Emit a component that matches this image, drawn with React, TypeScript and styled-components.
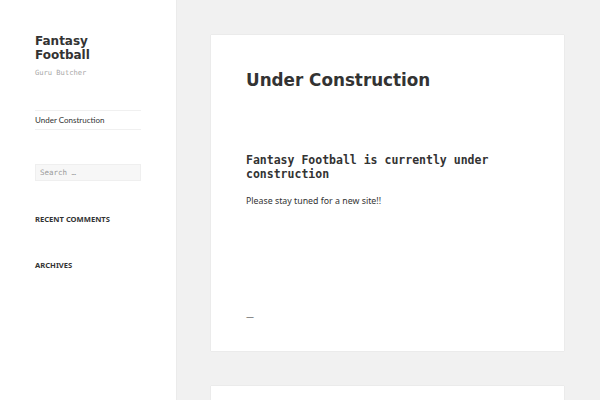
import styled, { createGlobalStyle } from "styled-components";

const GlobalStyle = createGlobalStyle`
  html, body {
    margin: 0;
    padding: 0;
    background: #f1f1f1;
    color: #333;
  }
  * {
    box-sizing: border-box;
  }
`;

function App() {
  return (
    <>
      <GlobalStyle />
      <Page>
        <Sidebar>
          <SiteTitle>Fantasy Football</SiteTitle>
          <Tagline>Guru Butcher</Tagline>
          <Menu>
            <MenuItem>Under Construction</MenuItem>
          </Menu>
          <SearchBox placeholder="Search …" />
          <WidgetTitle>Recent Comments</WidgetTitle>
          <WidgetTitle>Archives</WidgetTitle>
        </Sidebar>
        <Main>
          <Card>
            <EntryTitle>Under Construction</EntryTitle>
            <EntryContent>
              <SubHeading>Fantasy Football is currently under construction</SubHeading>
              <Paragraph>Please stay tuned for a new site!!</Paragraph>
              <Dash>—</Dash>
            </EntryContent>
          </Card>
          <Card $short />
        </Main>
      </Page>
    </>
  );
}

const Page = styled.div`
  display: flex;
  height: 400px;
  overflow: hidden;
`;

const Sidebar = styled.aside`
  width: 176px;
  flex-shrink: 0;
  background: #fff;
  box-shadow: 0 0 1px rgba(0, 0, 0, 0.15);
  padding: 34px 35px 0 35px;
  display: flex;
  flex-direction: column;
`;

const SiteTitle = styled.h1`
  margin: 0;
  font-family: "DejaVu Sans", sans-serif;
  font-weight: bold;
  font-size: 12px;
  line-height: 14px;
  color: #333;
  width: 64px;
`;

const Tagline = styled.p`
  margin: 5px 0 0;
  font-family: "DejaVu Sans Mono", monospace;
  font-size: 7.1px;
  line-height: 11px;
  color: #a8a8a8;
`;

const Menu = styled.nav`
  margin-top: 32px;
  border-top: 1px solid #f0f0f0;
  border-bottom: 1px solid #f0f0f0;
`;

const MenuItem = styled.div`
  font-family: Lato, sans-serif;
  font-size: 8px;
  line-height: 18px;
  color: #333;
`;

const SearchBox = styled.input`
  margin-top: 34px;
  width: 106px;
  height: 17px;
  background: #f7f7f7;
  border: 1px solid #efefef;
  padding: 0 4px;
  font-family: "DejaVu Sans Mono", monospace;
  font-size: 7.5px;
  color: #333;
  outline: none;
  &::placeholder {
    color: #999;
  }
`;

const WidgetTitle = styled.h2`
  margin: 33px 0 0;
  font-family: "Noto Sans", sans-serif;
  font-weight: bold;
  font-size: 7.6px;
  line-height: 11px;
  text-transform: uppercase;
  color: #333;
  & + & {
    margin-top: 35px;
  }
`;

const Main = styled.main`
  flex: 1;
  padding: 35px 36px 0 35px;
  display: flex;
  flex-direction: column;
  gap: 35px;
`;

const Card = styled.article<{ $short?: boolean }>`
  background: #fff;
  box-shadow: 0 0 1px rgba(0, 0, 0, 0.15);
  height: ${(p) => (p.$short ? "60px" : "316px")};
  flex-shrink: 0;
  padding: 33px 35px 0 35px;
`;

const EntryTitle = styled.h1`
  margin: 0;
  font-family: "DejaVu Sans", sans-serif;
  font-weight: bold;
  font-size: 16.8px;
  line-height: 24px;
  color: #333;
`;

const EntryContent = styled.div`
  margin-top: 61px;
`;

const SubHeading = styled.h2`
  margin: 0;
  font-family: "DejaVu Sans Mono", monospace;
  font-weight: bold;
  font-size: 11.5px;
  line-height: 14px;
  color: #333;
`;

const Paragraph = styled.p`
  margin: 14px 0 0;
  font-family: "Noto Sans", sans-serif;
  font-size: 8.8px;
  line-height: 12px;
  color: #333;
`;

const Dash = styled.div`
  margin-top: 105px;
  font-family: "DejaVu Sans", sans-serif;
  font-size: 8px;
  line-height: 12px;
  color: #555;
`;

export default App;
